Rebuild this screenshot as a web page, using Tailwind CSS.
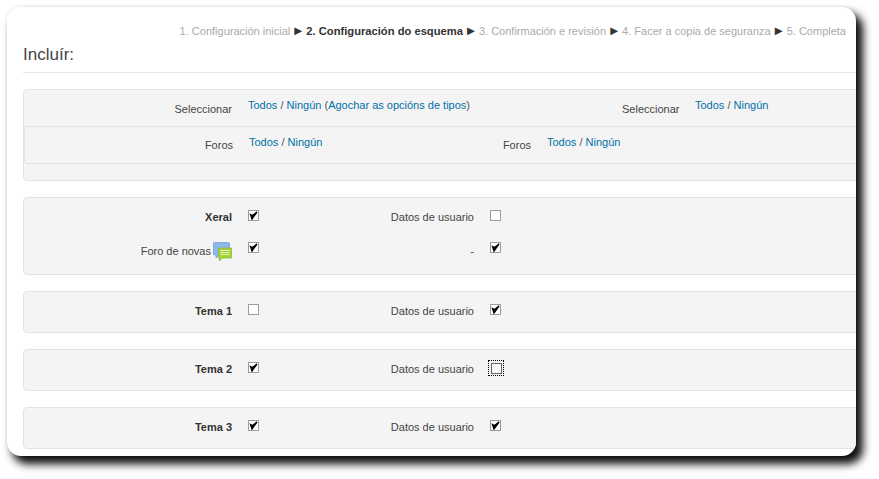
<!DOCTYPE html>
<html lang="en">
<head>
  <meta charset="UTF-8" />
  <title>Configuración do esquema</title>
  <script src="https://cdn.jsdelivr.net/npm/@tailwindcss/browser@4"></script>
</head>
<body class="bg-white text-[#333] font-['Liberation_Sans',Arial,sans-serif] overflow-hidden">
  <div class="w-[879px] h-[479px] pt-[7px] pl-[7px]">
    <div class="w-[849px] h-[449px] bg-white rounded-[14px] overflow-hidden shadow-[6px_7px_9px_1px_rgba(0,0,0,0.95),0_0_4px_rgba(0,0,0,0.06)] pl-4">

      <div class="h-[39px] pt-[17px] pr-[10px] text-right text-[11px] leading-[13px] text-[#aaa] whitespace-nowrap">
        1. Configuración inicial <span class="text-[#333] text-[13px] -mx-[1.5px]">►</span> <b class="text-[#333] text-[11.2px]">2. Configuración do esquema</b> <span class="text-[#333] text-[13px] -mx-[1.5px]">►</span> 3. Confirmación e revisión <span class="text-[#333] text-[13px] -mx-[1.5px]">►</span> 4. Facer a copia de seguranza <span class="text-[#333] text-[13px] -mx-[1.5px]">►</span> 5. Completa
      </div>

      <div class="h-[18px] text-[17px] leading-[18px] font-light text-[#444]">Incluír:</div>
      <div class="mt-[-1px] h-[10px] border-b border-[#e5e5e5]"></div>

      <div class="mt-4 w-[900px] h-[92px] bg-[#f4f4f4] border border-[#e3e3e3] rounded-[4px] text-[11px] leading-4">
        <div class="h-[36px] flex">
          <div class="w-[208px] pt-[11px] text-right text-[#444]">Seleccionar</div>
          <div class="w-[374px] ml-4 pt-[7px] text-[#555]"><a class="text-[#0070a8]">Todos</a> / <a class="text-[#0070a8]">Ningún</a> (<a class="text-[#0070a8]">Agochar as opcións de tipos</a>)</div>
          <div class="w-[57px] pt-[11px] text-right text-[#444]">Seleccionar</div>
          <div class="ml-4 pt-[7px] text-[#555]"><a class="text-[#0070a8]">Todos</a> / <a class="text-[#0070a8]">Ningún</a></div>
        </div>
        <div class="h-[38px] flex border border-[#e3e3e3] rounded-[3px]">
          <div class="w-[208px] pt-[10px] text-right text-[#444]">Foros</div>
          <div class="w-[253px] ml-4 pt-[7px] text-[#555]"><a class="text-[#0070a8]">Todos</a> / <a class="text-[#0070a8]">Ningún</a></div>
          <div class="w-[29px] pt-[10px] text-right text-[#444]">Foros</div>
          <div class="ml-4 pt-[7px] text-[#555]"><a class="text-[#0070a8]">Todos</a> / <a class="text-[#0070a8]">Ningún</a></div>
        </div>
      </div>

      <div class="mt-4 w-[900px] h-[78px] bg-[#f4f4f4] border border-[#e3e3e3] rounded-[4px] text-[11px] leading-4 pt-[11px]">
        <div class="h-[24px] flex">
          <div class="w-[208px] text-right font-bold">Xeral</div>
          <div class="w-[11px] ml-4 pt-[1px]"><svg width="11" height="11" viewBox="0 0 11 11"><rect x=".5" y=".5" width="10" height="10" fill="#fff" stroke="#a09e94"/><path d="M2.500 4.500 L4 9 L9 2 L4.500 5.500 Z" fill="#000" stroke="#000" stroke-width="1.300"/></svg></div>
          <div class="w-[215px] text-right text-[#444]">Datos de usuario</div>
          <div class="w-[11px] ml-4 pt-[1px]"><svg width="11" height="11" viewBox="0 0 11 11"><rect x=".5" y=".5" width="10" height="10" fill="#fff" stroke="#a09e94"/></svg></div>
        </div>
        <div class="mt-[8px] h-[24px] flex">
          <div class="w-[208px] flex justify-end items-start text-[#444]">
            <span class="pt-[2px]">Foro de novas</span>
            <svg class="ml-[2px] mt-[1px]" width="19" height="20" viewBox="0 0 19 20"><path d="M.5 1.500 Q.5 .5 1.500 .5 H15.500 Q16.500 .5 16.500 1.500 V12 Q16.500 13 15.500 13 H6 L3 16 V13 H1.500 Q.5 13 .5 12 Z" fill="#8db8ea" stroke="#6c9ad6" stroke-width=".7"/><path d="M5.500 6 H18.500 V16 H9 L6.500 19 V16 H5.500 Z" fill="#a6d23b" stroke="#86b322" stroke-width=".7"/><path d="M7.500 8.500 H16.500 M7.500 10.500 H16.500 M7.500 12.500 H16.500" stroke="#e3f3b0" stroke-width="1"/></svg>
          </div>
          <div class="w-[11px] ml-4 pt-[1px]"><svg width="11" height="11" viewBox="0 0 11 11"><rect x=".5" y=".5" width="10" height="10" fill="#fff" stroke="#a09e94"/><path d="M2.500 4.500 L4 9 L9 2 L4.500 5.500 Z" fill="#000" stroke="#000" stroke-width="1.300"/></svg></div>
          <div class="w-[215px] pt-[2px] text-right text-[#444]">-</div>
          <div class="w-[11px] ml-4 pt-[1px]"><svg width="11" height="11" viewBox="0 0 11 11"><rect x=".5" y=".5" width="10" height="10" fill="#fff" stroke="#a09e94"/><path d="M2.500 4.500 L4 9 L9 2 L4.500 5.500 Z" fill="#000" stroke="#000" stroke-width="1.300"/></svg></div>
        </div>
      </div>

      <div class="mt-4 w-[900px] h-[42px] bg-[#f4f4f4] border border-[#e3e3e3] rounded-[4px] text-[11px] leading-4 pt-[11px] flex">
        <div class="w-[208px] text-right font-bold">Tema 1</div>
        <div class="w-[11px] ml-4 pt-[1px]"><svg width="11" height="11" viewBox="0 0 11 11"><rect x=".5" y=".5" width="10" height="10" fill="#fff" stroke="#a09e94"/></svg></div>
        <div class="w-[215px] text-right text-[#444]">Datos de usuario</div>
        <div class="w-[11px] ml-4 pt-[1px]"><svg width="11" height="11" viewBox="0 0 11 11"><rect x=".5" y=".5" width="10" height="10" fill="#fff" stroke="#a09e94"/><path d="M2.500 4.500 L4 9 L9 2 L4.500 5.500 Z" fill="#000" stroke="#000" stroke-width="1.300"/></svg></div>
      </div>

      <div class="mt-4 w-[900px] h-[42px] bg-[#f4f4f4] border border-[#e3e3e3] rounded-[4px] text-[11px] leading-4 pt-[11px] flex">
        <div class="w-[208px] text-right font-bold">Tema 2</div>
        <div class="w-[11px] ml-4 pt-[1px]"><svg width="11" height="11" viewBox="0 0 11 11"><rect x=".5" y=".5" width="10" height="10" fill="#fff" stroke="#a09e94"/><path d="M2.500 4.500 L4 9 L9 2 L4.500 5.500 Z" fill="#000" stroke="#000" stroke-width="1.300"/></svg></div>
        <div class="w-[215px] text-right text-[#444]">Datos de usuario</div>
        <div class="w-[11px] ml-4"><div class="-ml-[2px] -mt-px w-4 h-4 border border-dotted border-black flex items-center justify-center"><svg width="11" height="11" viewBox="0 0 11 11"><rect x=".5" y=".5" width="10" height="10" fill="#f8f8f8" stroke="#666"/></svg></div></div>
      </div>

      <div class="mt-4 w-[900px] h-[42px] bg-[#f4f4f4] border border-[#e3e3e3] rounded-[4px] text-[11px] leading-4 pt-[11px] flex">
        <div class="w-[208px] text-right font-bold">Tema 3</div>
        <div class="w-[11px] ml-4 pt-[1px]"><svg width="11" height="11" viewBox="0 0 11 11"><rect x=".5" y=".5" width="10" height="10" fill="#fff" stroke="#a09e94"/><path d="M2.500 4.500 L4 9 L9 2 L4.500 5.500 Z" fill="#000" stroke="#000" stroke-width="1.300"/></svg></div>
        <div class="w-[215px] text-right text-[#444]">Datos de usuario</div>
        <div class="w-[11px] ml-4 pt-[1px]"><svg width="11" height="11" viewBox="0 0 11 11"><rect x=".5" y=".5" width="10" height="10" fill="#fff" stroke="#a09e94"/><path d="M2.500 4.500 L4 9 L9 2 L4.500 5.500 Z" fill="#000" stroke="#000" stroke-width="1.300"/></svg></div>
      </div>

    </div>
  </div>
</body>
</html>
